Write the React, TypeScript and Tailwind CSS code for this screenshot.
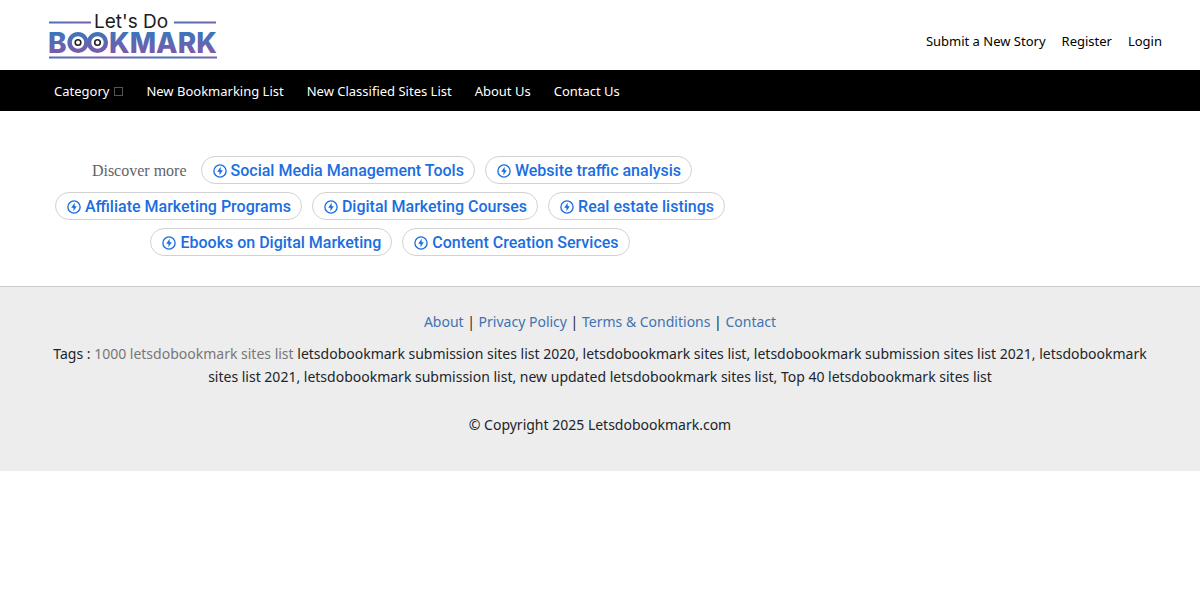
import React from 'react';

const accountLinks = ['Submit a New Story', 'Register', 'Login'];

const navLinks = ['New Bookmarking List', 'New Classified Sites List', 'About Us', 'Contact Us'];

const topics = [
  'Social Media Management Tools',
  'Website traffic analysis',
  'Affiliate Marketing Programs',
  'Digital Marketing Courses',
  'Real estate listings',
  'Ebooks on Digital Marketing',
  'Content Creation Services',
];

const footerLinks = ['About', 'Privacy Policy', 'Terms & Conditions', 'Contact'];

const Logo: React.FC = () => (
  <svg width="170" height="58" viewBox="0 -7 170 58" role="img" aria-label="Let's Do Bookmark">
    <defs>
      <linearGradient id="letters" gradientUnits="userSpaceOnUse" x1="0" y1="20" x2="0" y2="40">
        <stop offset="0" stopColor="#3f74ba" />
        <stop offset="1" stopColor="#7c5aa9" />
      </linearGradient>
      <linearGradient id="rule" gradientUnits="userSpaceOnUse" x1="0" y1="0" x2="170" y2="0">
        <stop offset="0" stopColor="#4a72b8" />
        <stop offset="0.3" stopColor="#7560ac" />
        <stop offset="0.7" stopColor="#4a72b8" />
        <stop offset="1" stopColor="#7560ac" />
      </linearGradient>
    </defs>
    <g fill="url(#rule)">
      <rect x="1" y="8.5" width="42" height="2" />
      <rect x="126" y="8.5" width="42" height="2" />
      <rect x="1" y="43.5" width="168" height="2" />
    </g>
    <text x="46" y="15" className="font-['Inter',sans-serif] text-[19px]" fill="#1c1c1c">Let's Do</text>
    <g className="font-['Inter',sans-serif] text-[28px] font-extrabold" fill="url(#letters)">
      <text x="0" y="40">B</text>
      <text x="61" y="40">KMARK</text>
    </g>
    <g fill="#fff" stroke="url(#letters)" strokeWidth="4.4">
      <circle cx="30" cy="29.5" r="8.4" />
      <circle cx="49.5" cy="29.5" r="8.4" />
    </g>
    <g fill="#fff" stroke="#222" strokeWidth="1.6">
      <circle cx="30" cy="29.5" r="2.8" />
      <circle cx="49.5" cy="29.5" r="2.8" />
    </g>
  </svg>
);

const BoltIcon: React.FC = () => (
  <svg className="h-4 w-4" viewBox="0 0 24 24" fill="none" aria-hidden="true">
    <circle cx="12" cy="12" r="9.2" stroke="currentColor" strokeWidth="2" />
    <path d="M13 5.5 7.8 13h3.4v5.5L16.2 11H13z" fill="currentColor" />
  </svg>
);

const App: React.FC = () => {
  return (
    <div className="bg-white font-['Noto_Sans',sans-serif] text-[#212529]">
      <header className="flex h-[70px] items-center justify-between pr-[38px] pl-12">
        <a href="#">
          <Logo />
        </a>
        <div className="flex gap-4 pt-3 text-[13px] leading-5 text-black">
          {accountLinks.map((label) => (
            <a key={label} href="#">{label}</a>
          ))}
        </div>
      </header>

      <nav className="flex h-[41px] items-center gap-[23px] bg-black px-[54px] pt-0.5 text-[13px] text-white">
        <a href="#" className="flex items-center gap-[5px]">
          Category
          <span className="h-[9px] w-[9px] border border-[#555]" />
        </a>
        {navLinks.map((label) => (
          <a key={label} href="#">{label}</a>
        ))}
      </nav>

      <main className="pt-[45px] pb-[30px] pl-10">
        <div className="flex max-w-[700px] flex-wrap items-center justify-center gap-x-[10px] gap-y-2">
          <span className="px-1 pt-0.5 font-['Liberation_Serif',serif] text-base text-[#5f6368]">Discover more</span>
          {topics.map((topic) => (
            <a
              key={topic}
              href="#"
              className="flex h-7 items-center gap-[3px] rounded-full border border-[#d2d2d2] px-[10px] pt-px font-['Roboto',sans-serif] text-base font-medium text-[#1a6ee0]"
            >
              <BoltIcon />
              {topic}
            </a>
          ))}
        </div>
      </main>

      <footer className="border-t border-[#ccc] bg-[#ededed] px-10 pt-[23px] pb-[35px] text-center text-[14px] leading-[23px]">
        <p>
          {footerLinks.map((label, index) => (
            <React.Fragment key={label}>
              {index > 0 && ' | '}
              <a href="#" className="text-[#4272b0]">{label}</a>
            </React.Fragment>
          ))}
        </p>
        <p className="mt-[9px]">
          Tags : <a href="#" className="text-[#777]">1000 letsdobookmark sites list</a> letsdobookmark submission sites
          list 2020, letsdobookmark sites list, letsdobookmark submission sites list 2021, letsdobookmark sites list
          2021, letsdobookmark submission list, new updated letsdobookmark sites list, Top 40 letsdobookmark sites list
        </p>
        <p className="mt-[25px]">© Copyright 2025 Letsdobookmark.com</p>
      </footer>
    </div>
  );
};

export default App;
